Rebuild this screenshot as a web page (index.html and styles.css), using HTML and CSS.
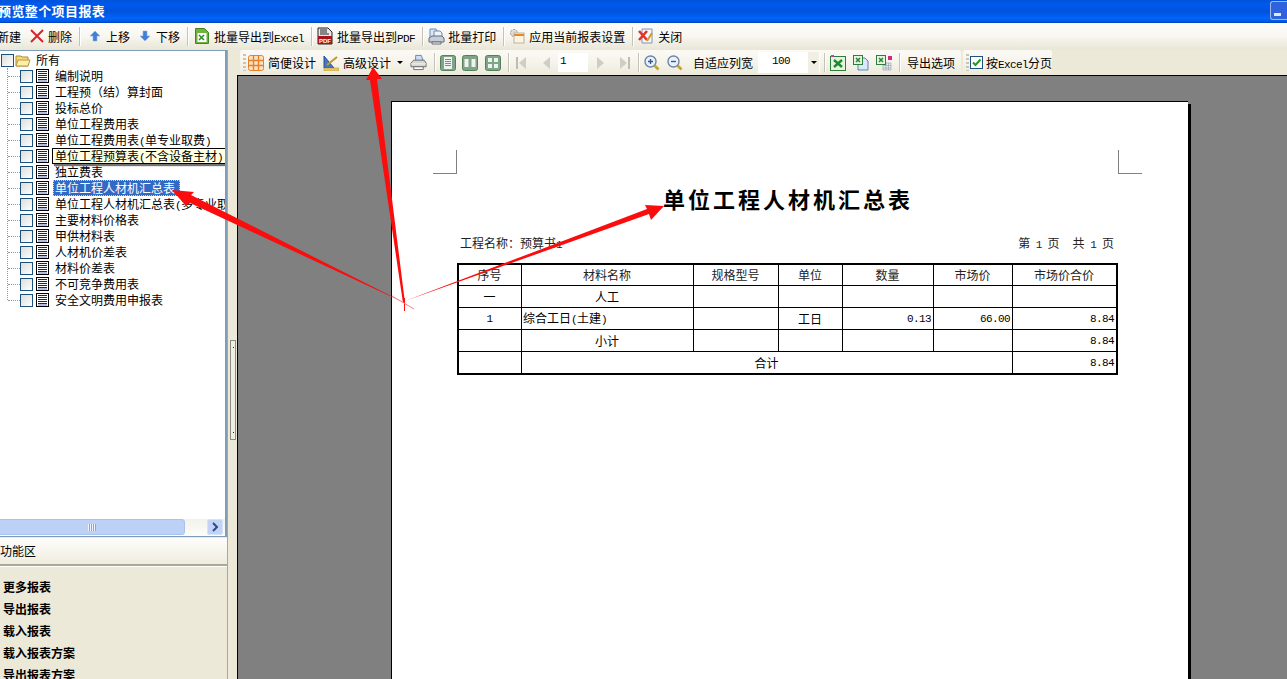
FILE: index.html
```html
<!DOCTYPE html>
<html lang="zh-CN">
  <head>
    <meta charset="UTF-8" />
    <title>预览整个项目报表</title>
    <link rel="stylesheet" href="styles.css">
  </head>
  <body>
    <svg class="defs" width="0" height="0">
      <symbol id="doc" viewBox="0 0 13 14">
        <rect x=".5" y=".5" width="12" height="13" fill="#fff" stroke="#000"/>
        <path d="M2 2.5h9M2 4.5h9M2 6.5h9M2 8.5h9M2 10.5h9" stroke="#0a1f9c"/>
        <path d="M2 12h9" stroke="#0a1f9c" stroke-width=".6"/>
      </symbol>
      <symbol id="folder" viewBox="0 0 16 14">
        <path d="M1 3h5l1 1h6v9H1z" fill="#f6d874" stroke="#a98b3a"/>
        <path d="M1 13l2-6h12l-2 6z" fill="#fdeea8" stroke="#b59a45"/>
      </symbol>
      <symbol id="excel-doc" viewBox="0 0 14 16">
        <path d="M.5.5h9l4 4v11H.5z" fill="#6fb33c" stroke="#3e8a22"/>
        <rect x="2.5" y="5" width="9" height="9" fill="#fff"/>
        <path d="M4 7l5 5M9 7l-5 5" stroke="#2f8f2a" stroke-width="1.6"/>
      </symbol>
      <symbol id="printer" viewBox="0 0 18 17">
        <path d="M6 1h6l2 6H6z" fill="#cfe0f5" stroke="#5f86b8"/>
        <path d="M1 9l3-3h11l2 3v4H1z" fill="#d6d6d2" stroke="#6b6b6b"/>
        <path d="M1 10h16" stroke="#f4f4f0"/>
        <path d="M4 13h10v3H4z" fill="#fff" stroke="#6b6b6b"/>
      </symbol>
      <symbol id="excel-box" viewBox="0 0 16 16">
        <rect x=".5" y="1.5" width="15" height="14" fill="#e6f3df" stroke="#2f7d3a"/>
        <path d="M4 5l8 7M12 5l-8 7" stroke="#1f8a2f" stroke-width="2.4"/>
        <rect x="1" y="0" width="3" height="2" fill="#e030c0"/>
      </symbol>
      <symbol id="zoom" viewBox="0 0 16 16">
        <circle cx="6.5" cy="6.5" r="5.5" fill="#e8f0fa" stroke="#6d86a8" stroke-width="1.4"/>
        <path d="M10.5 10.5l4 4" stroke="#c9a033" stroke-width="2.6"/>
      </symbol>
      <symbol id="page-btn" viewBox="0 0 16 16">
        <rect x=".5" y=".5" width="15" height="15" rx="2" fill="#7fa586" stroke="#54805c"/>
      </symbol>
    </svg>

    <header class="titlebar">
      <span class="title-text">预览整个项目报表</span>
      <span class="min-btn"><i></i></span>
    </header>

    <nav class="toolbar">
      <span class="first-tool">新建</span>
      <svg class="g9" width="14" height="16" viewBox="0 0 14 16"><path d="M1 2l12 12M13 2L1 14" stroke="#d8232a" stroke-width="2"/></svg>
      <span class="g4">删除</span>
      <i class="sep"></i>
      <svg class="g10" width="10" height="12" viewBox="0 0 10 12"><path d="M5 1l5 5H7v5H3V6H0z" fill="#3f7fd6" stroke="#8fb4e8" stroke-width=".6"/></svg>
      <span class="g6">上移</span>
      <svg class="g10" width="10" height="12" viewBox="0 0 10 12"><path d="M5 11l5-5H7V1H3v5H0z" fill="#3f7fd6" stroke="#8fb4e8" stroke-width=".6"/></svg>
      <span class="g6">下移</span>
      <i class="sep"></i>
      <svg width="14" height="16"><use href="#excel-doc"/></svg>
      <span class="g5">批量导出到<span class="lat">Excel</span></span>
      <i class="sep"></i>
      <svg class="g5" width="16" height="18" viewBox="0 0 16 18">
        <path d="M1 1h10l4 4v12H1z" fill="#e8e8e8" stroke="#222"/>
        <path d="M3 3h7M3 5h7M3 7h9" stroke="#222" stroke-width="1.2"/>
        <rect x="1" y="9" width="14" height="8" fill="#a8141c"/>
        <text x="8" y="16" class="pdf-label">PDF</text>
      </svg>
      <span class="g4">批量导出到<span class="lat">PDF</span></span>
      <i class="sep"></i>
      <svg class="g5" width="17" height="17" viewBox="0 0 17 17">
        <path d="M2 1h6l2 3v7H2z" fill="#dbe7f7" stroke="#6a8cb8"/>
        <path d="M6 3h6l2 2v6H6z" fill="#eef3fb" stroke="#6a8cb8"/>
        <path d="M1 10l3-2h10l2 2v4H1z" fill="#c8ced8" stroke="#5f6b7c"/>
        <path d="M4 14h9v2H4z" fill="#fff" stroke="#5f6b7c"/>
      </svg>
      <span class="g3">批量打印</span>
      <i class="sep"></i>
      <svg class="g5" width="16" height="16" viewBox="0 0 16 16">
        <circle cx="5" cy="5" r="3.5" fill="#ddd" stroke="#999" stroke-dasharray="2 1"/>
        <rect x="5" y="5" width="10" height="10" fill="#fdf3df" stroke="#b9b2a0"/>
        <path d="M5 7h10" stroke="#e58a2c" stroke-width="2"/>
      </svg>
      <span class="g4">应用当前报表设置</span>
      <i class="sep"></i>
      <svg class="g5" width="16" height="16" viewBox="0 0 16 16">
        <path d="M4 1h10v14H4z" fill="#f4f6fb" stroke="#7f94b8"/>
        <path d="M1 3l8 9M9 3l-8 9" stroke="#e0342a" stroke-width="2.6"/>
        <path d="M14 5l-5 8" stroke="#d59a2a" stroke-width="2"/>
      </svg>
      <span class="g4">关闭</span>
    </nav>

    <div class="main">
      <aside class="side">
        <div class="tree-pane">
          <div class="tree">
            <div class="root-row">
              <i class="check"></i>
              <svg width="16" height="14"><use href="#folder"/></svg>
              <span>所有</span>
            </div>
            <ul class="tree-list">
              <li class="tree-row"><i class="check"></i><svg width="13" height="14"><use href="#doc"/></svg><span>编制说明</span></li>
              <li class="tree-row"><i class="check"></i><svg width="13" height="14"><use href="#doc"/></svg><span>工程预（结）算封面</span></li>
              <li class="tree-row"><i class="check"></i><svg width="13" height="14"><use href="#doc"/></svg><span>投标总价</span></li>
              <li class="tree-row"><i class="check"></i><svg width="13" height="14"><use href="#doc"/></svg><span>单位工程费用表</span></li>
              <li class="tree-row"><i class="check"></i><svg width="13" height="14"><use href="#doc"/></svg><span>单位工程费用表<span class="lat">(</span>单专业取费<span class="lat">)</span></span></li>
              <li class="tree-row"><i class="check"></i><svg width="13" height="14"><use href="#doc"/></svg><span>单位工程预算表<span class="lat">(</span>不含设备主材<span class="lat">)</span></span>
                <div class="tooltip">单位工程预算表<span class="lat">(</span>不含设备主材<span class="lat">)</span></div>
              </li>
              <li class="tree-row"><i class="check"></i><svg width="13" height="14"><use href="#doc"/></svg><span>独立费表</span></li>
              <li class="tree-row"><i class="check"></i><svg width="13" height="14"><use href="#doc"/></svg><span class="selected">单位工程人材机汇总表</span></li>
              <li class="tree-row"><i class="check"></i><svg width="13" height="14"><use href="#doc"/></svg><span>单位工程人材机汇总表<span class="lat">(</span>多专业取费<span class="lat">)</span></span></li>
              <li class="tree-row"><i class="check"></i><svg width="13" height="14"><use href="#doc"/></svg><span>主要材料价格表</span></li>
              <li class="tree-row"><i class="check"></i><svg width="13" height="14"><use href="#doc"/></svg><span>甲供材料表</span></li>
              <li class="tree-row"><i class="check"></i><svg width="13" height="14"><use href="#doc"/></svg><span>人材机价差表</span></li>
              <li class="tree-row"><i class="check"></i><svg width="13" height="14"><use href="#doc"/></svg><span>材料价差表</span></li>
              <li class="tree-row"><i class="check"></i><svg width="13" height="14"><use href="#doc"/></svg><span>不可竞争费用表</span></li>
              <li class="tree-row"><i class="check"></i><svg width="13" height="14"><use href="#doc"/></svg><span>安全文明费用申报表</span></li>
            </ul>
          </div>
          <div class="hscroll">
            <div class="hscroll-thumb"><i></i></div>
            <div class="hscroll-btn">
              <svg width="8" height="10" viewBox="0 0 8 10"><path d="M2 1l4 4-4 4" fill="none" stroke="#2a4a8a" stroke-width="2"/></svg>
            </div>
          </div>
        </div>
        <div class="func-head">功能区</div>
        <ul class="func-list">
          <li>更多报表</li>
          <li>导出报表</li>
          <li>载入报表</li>
          <li>载入报表方案</li>
          <li>导出报表方案</li>
        </ul>
      </aside>

      <div class="splitter"><i class="grip"></i></div>

      <section class="preview">
        <div class="preview-bars">
          <div class="pbar">
            <i class="dots"></i>
            <svg class="g2" width="16" height="16" viewBox="0 0 16 16">
              <rect x=".5" y=".5" width="15" height="15" rx="2" fill="#fbe3c8" stroke="#e8802a"/>
              <path d="M5.5 1v14M10.5 1v14M1 5.5h14M1 10.5h14" stroke="#e8802a" stroke-width="1.4"/>
            </svg>
            <span class="g4">简便设计</span>
            <svg width="16" height="16" viewBox="0 0 16 16">
              <path d="M1 1v12l10 0z" fill="#3f78c9" stroke="#2a4f8f"/>
              <path d="M4 10l10-8" stroke="#c8962a" stroke-width="2"/>
              <rect x="1" y="13" width="15" height="3" fill="#e8c860" stroke="#a98b3a" stroke-width=".5"/>
            </svg>
            <span class="g4">高级设计</span>
            <i class="caret g6"></i>
            <svg width="17" height="17"><use href="#printer"/></svg>
            <i class="sep"></i>
            <svg class="g5" width="16" height="16" viewBox="0 0 16 16">
              <use href="#page-btn"/>
              <rect x="4" y="2" width="8" height="12" fill="#eef2f0"/>
              <path d="M5 4.500h6M5 6.500h6M5 8.500h6M5 10.500h6" stroke="#7a8a9a"/>
            </svg>
            <svg class="g6" width="16" height="16" viewBox="0 0 16 16">
              <use href="#page-btn"/>
              <rect x="2.500" y="4" width="4" height="8" fill="#eef2f0"/>
              <rect x="9.500" y="4" width="4" height="8" fill="#eef2f0"/>
            </svg>
            <svg width="16" height="16" viewBox="0 0 16 16">
              <use href="#page-btn"/>
              <path d="M3 3h4v4H3zM9 3h4v4H9zM3 9h4v4H3zM9 9h4v4H9z" fill="#eef2f0"/>
            </svg>
            <i class="sep"></i>
            <svg width="10" height="12" viewBox="0 0 10 12"><path d="M1 0v12" stroke="#bdbcb4" stroke-width="2"/><path d="M10 0v12L3 6z" fill="#cfcec6"/></svg>
            <svg class="g15" width="10" height="12" viewBox="0 0 10 12"><path d="M9 0v12L2 6z" fill="#cfcec6"/></svg>
            <div class="page-input">1</div>
            <svg class="g8" width="10" height="12" viewBox="0 0 10 12"><path d="M1 0v12l7-6z" fill="#cfcec6"/></svg>
            <svg class="g14" width="10" height="12" viewBox="0 0 10 12"><path d="M9 0v12" stroke="#bdbcb4" stroke-width="2"/><path d="M0 0v12l7-6z" fill="#cfcec6"/></svg>
            <i class="sep g8"></i>
            <svg class="g5" width="16" height="16" viewBox="0 0 16 16"><use href="#zoom"/><path d="M4 6.500h5M6.500 4v5" stroke="#34568a" stroke-width="1.300"/></svg>
            <svg width="16" height="16" viewBox="0 0 16 16"><use href="#zoom"/><path d="M4 6.500h5" stroke="#34568a" stroke-width="1.300"/></svg>
            <span class="g10">自适应列宽</span>
            <div class="combo g5"><span class="combo-value">100</span><span class="combo-btn"><i class="caret"></i></span></div>
            <i class="sep g4"></i>
            <svg class="g5" width="16" height="16"><use href="#excel-box"/></svg>
            <svg width="16" height="16" viewBox="0 0 16 16">
              <path d="M5 3h7l3 3v9H5z" fill="#dbe7fa" stroke="#5f82bd"/>
              <rect x=".5" y=".5" width="9" height="9" fill="#e6f3df" stroke="#2f7d3a"/>
              <path d="M3 3l4 4M7 3l-4 4" stroke="#1f8a2f" stroke-width="1.500"/>
            </svg>
            <svg width="16" height="16" viewBox="0 0 16 16">
              <path d="M7 8h8v7H7zM7 10.500h8M7 13h8M10 8v7M12.500 8v7" fill="#e8ebf2" stroke="#9aa3b5" stroke-width=".7"/>
              <rect x=".5" y=".5" width="9" height="9" fill="#e6f3df" stroke="#2f7d3a"/>
              <path d="M3 3l4 4M7 3l-4 4" stroke="#1f8a2f" stroke-width="1.500"/>
              <rect x="12" y="1" width="4" height="4" fill="#d02a80"/>
            </svg>
            <i class="sep"></i>
            <span>导出选项</span>
          </div>
          <div class="pbar pbar-check">
            <i class="dots"></i>
            <i class="check is-checked g1">
              <svg width="11" height="11" viewBox="0 0 11 11"><path d="M2 5.500l2.500 2.500L9.500 2.500" fill="none" stroke="#1f9a2a" stroke-width="2"/></svg>
            </i>
            <span class="g3">按<span class="lat">Excel</span>分页</span>
          </div>
        </div>

        <div class="viewer">
          <article class="sheet">
            <div class="crops"><i class="crop-l"></i><i class="crop-r"></i></div>
            <h1 class="sheet-title">单位工程人材机汇总表</h1>
            <div class="sheet-info">
              <span>工程名称：预算书<span class="lat">1</span></span>
              <span class="page-no"><span>第 <span class="lat">1</span> 页</span><span>共 <span class="lat">1</span> 页</span></span>
            </div>
            <table class="report">
              <colgroup>
                <col class="c1"><col class="c2"><col class="c3"><col class="c4"><col class="c5"><col class="c6"><col class="c7">
              </colgroup>
              <tr class="report-head">
                <td>序号</td><td>材料名称</td><td>规格型号</td><td>单位</td><td>数量</td><td>市场价</td><td>市场价合价</td>
              </tr>
              <tr>
                <td>一</td><td>人工</td><td></td><td></td><td></td><td></td><td></td>
              </tr>
              <tr>
                <td class="lat">1</td><td class="left">综合工日<span class="lat">(</span>土建<span class="lat">)</span></td><td></td><td>工日</td><td class="num">0.13</td><td class="num">66.00</td><td class="num">8.84</td>
              </tr>
              <tr>
                <td></td><td>小计</td><td></td><td></td><td></td><td></td><td class="num">8.84</td>
              </tr>
              <tr class="report-foot">
                <td></td><td colspan="5">合计</td><td class="num">8.84</td>
              </tr>
            </table>
          </article>
        </div>
      </section>
    </div>

    <svg class="arrows" width="1287" height="679" viewBox="0 0 1287 679">
      <polygon points="373,67 382,79 377,79 405,303 403,303 370,80 366,80" fill="#fb0d0d"/>
      <polygon points="172,190 194,192 191,195 405,303 190,203 186,206" fill="#fb0d0d"/>
      <polygon points="664,206 645,205 647,209 405,301 649,214 651,220" fill="#fb0d0d"/>
      <path d="M404.500 298v13" stroke="#fb0d0d"/>
      <path d="M392 296l22 13" stroke="#fb8080"/>
    </svg>
  </body>
</html>
```

FILE: styles.css
```css
* {
  box-sizing: border-box;
}
html, body {
  margin: 0;
  height: 679px;
  overflow: hidden;
}
body {
  position: relative;
  font-family: "Noto Sans CJK SC", "Liberation Sans", sans-serif;
  font-size: 12px;
  color: #000;
  background-color: #ece9d8;
}
ul {
  list-style: none;
  margin: 0;
  padding: 0;
}
i {
  display: block;
  font-style: normal;
}
svg {
  display: block;
  flex-shrink: 0;
}
.defs {
  position: absolute;
}
.lat {
  font-family: "Liberation Mono", monospace;
  font-size: 11px;
  letter-spacing: -0.6px;
}

/* spacing between toolbar items, 7px unless set */
.toolbar > *, .pbar > * {
  margin-left: 7px;
  flex-shrink: 0;
}
.toolbar > .g3, .pbar > .g3 { margin-left: 3px; }
.toolbar > .g4, .pbar > .g4 { margin-left: 4px; }
.toolbar > .g5, .pbar > .g5 { margin-left: 5px; }
.toolbar > .g6, .pbar > .g6 { margin-left: 6px; }
.toolbar > .g9 { margin-left: 9px; }
.toolbar > .g10, .pbar > .g10 { margin-left: 10px; }
.pbar > .g1 { margin-left: 1px; }
.pbar > .g2 { margin-left: 2px; }
.pbar > .g8 { margin-left: 8px; }
.pbar > .g14 { margin-left: 14px; }
.pbar > .g15 { margin-left: 15px; }

.sep {
  width: 1px;
  height: 19px;
  background-color: #c5c2b8;
  box-shadow: 1px 0 0 #fff;
}

/* title bar */
.titlebar {
  display: flex;
  justify-content: space-between;
  height: 23px;
  background: linear-gradient(#0054d8 0, #0058ee 20%, #0053dd 50%, #0064fb 80%, #0058e6 94%, #003cb0 100%);
}
.title-text {
  margin-left: -2px;
  font-size: 13px;
  font-weight: 700;
  line-height: 21px;
  letter-spacing: 0.4px;
  color: #fff;
}
.min-btn {
  width: 17px;
  height: 19px;
  margin-top: 1px;
  padding: 11px 0 0 3px;
  border: 1px solid #9db8ee;
  border-right: 0;
  border-radius: 3px 0 0 3px;
  background-color: #2f62dc;
}
.min-btn i {
  width: 7px;
  height: 3px;
  background-color: #dfe6f7;
}

/* main toolbar */
.toolbar {
  display: flex;
  align-items: center;
  height: 27px;
  padding-bottom: 1px;
  background: linear-gradient(#fefdfb, #f7f6f0 50%, #e9e6d6);
}
.toolbar > .first-tool {
  margin-left: -3px;
}

.main {
  display: flex;
  height: 629px;
}

/* left side */
.side {
  display: flex;
  flex-direction: column;
  width: 228px;
  border-right: 1px solid #aca899;
}
.tree-pane {
  display: flex;
  flex-direction: column;
  height: 487px;
  border-top: 1px solid #7f9db9;
  border-right: 2px solid #7f9db9;
  border-bottom: 1px solid #7f9db9;
  background-color: #fff;
  flex-shrink: 0;
}
.tree {
  flex: 1;
  padding-top: 1px;
  overflow: hidden;
  white-space: nowrap;
}
.root-row, .tree-row {
  display: flex;
  align-items: center;
  height: 16px;
}
.root-row {
  padding-left: 1px;
}
.root-row svg {
  margin-left: 1px;
}
.root-row span {
  margin: -1px 0 0 5px;
}
.check {
  width: 13px;
  height: 13px;
  border: 1px solid #1c5180;
  background: linear-gradient(135deg, #dcdcd7, #fff);
  flex-shrink: 0;
}
.check.is-checked {
  background: #fff;
}
.tree-list {
  position: relative;
}
.tree-list::before {
  content: "";
  position: absolute;
  left: 7px;
  top: 0;
  bottom: 8px;
  border-left: 1px dotted #999;
}
.tree-row {
  position: relative;
  padding-left: 20px;
}
.tree-row::before {
  content: "";
  position: absolute;
  left: 8px;
  top: 8px;
  width: 12px;
  border-top: 1px dotted #999;
}
.tree-row svg {
  margin-left: 3px;
}
.tree-row > span {
  margin: -1px 0 0 6px;
}
.tree-row > .selected {
  margin: 0 0 0 4px;
  padding: 0 1px;
  border: 1px dotted #e8d08a;
  height: 16px;
  line-height: 13px;
  width: 127px;
  background-color: #316ac5;
  color: #fff;
}
.tooltip {
  position: absolute;
  left: 52px;
  top: 0;
  width: 174px;
  height: 16px;
  padding-left: 2px;
  line-height: 13px;
  border: 1px solid #000;
  background-color: #ffffe1;
  box-shadow: 2px 2px 1px rgba(0, 0, 0, 0.55);
}
.hscroll {
  display: flex;
  height: 17px;
  padding-bottom: 1px;
  background: linear-gradient(#f2f1ea, #fdfdfa);
}
.hscroll-thumb {
  display: flex;
  align-items: center;
  justify-content: center;
  width: 186px;
  margin-left: -1px;
  border: 1px solid #a9c2ee;
  border-radius: 0 3px 3px 0;
  background-color: #bdd0f6;
}
.hscroll-thumb i {
  width: 8px;
  height: 7px;
  background: repeating-linear-gradient(90deg, #eef3fd 0 1px, #8aa5da 1px 2px);
}
.hscroll-btn {
  display: flex;
  align-items: center;
  justify-content: center;
  width: 16px;
  margin-left: 22px;
  border: 1px solid #d7e2f8;
  border-radius: 2px;
  background-color: #c2d3f7;
}
.func-head {
  height: 28px;
  margin-top: 1px;
  line-height: 26px;
  border-bottom: 2px solid #aca899;
  background: linear-gradient(#fefdfb, #efecdf);
  box-shadow: 0 1px 0 #fff;
  flex-shrink: 0;
}
.func-list {
  padding: 10px 0 0 3px;
  font-weight: 700;
}
.func-list li {
  height: 22px;
  line-height: 22px;
}

.splitter {
  width: 9px;
  padding: 290px 0 0 2px;
}
.grip {
  width: 6px;
  height: 100px;
  border: 1px solid #8d8a7e;
  background:
    linear-gradient(#222, #222) 2px 6px / 1px 1px no-repeat,
    linear-gradient(#222, #222) 2px 91px / 1px 1px no-repeat,
    #f0eee2;
}

/* report preview */
.preview {
  flex: 1;
  display: flex;
  flex-direction: column;
  min-width: 0;
}
.preview-bars {
  display: flex;
  height: 25px;
  padding-left: 3px;
  flex-shrink: 0;
}
.pbar {
  display: flex;
  align-items: center;
  height: 25px;
  padding: 0 6px 0 3px;
  border-radius: 3px 3px 0 0;
  background: linear-gradient(#fbfaf5, #f4f2e8 60%, #ece9d8);
}
.pbar-check {
  margin-left: 2px;
  padding-right: 0;
}
.pbar > .dots {
  width: 3px;
  height: 17px;
  margin-left: 0;
  background: repeating-linear-gradient(#c8c5b8 0 2px, transparent 2px 4px);
}
.caret {
  width: 0;
  height: 0;
  border-left: 3px solid transparent;
  border-right: 3px solid transparent;
  border-top: 3px solid #000;
}
.page-input {
  width: 30px;
  height: 19px;
  padding-left: 2px;
  line-height: 17px;
  font-family: "Liberation Mono", monospace;
  font-size: 11px;
  background-color: #fff;
}
.combo {
  display: flex;
  width: 62px;
  height: 21px;
  background-color: #fff;
}
.combo-value {
  width: 50px;
  padding-left: 14px;
  line-height: 19px;
  font-family: "Liberation Mono", monospace;
  font-size: 11px;
  letter-spacing: -0.6px;
}
.combo-btn {
  display: flex;
  align-items: center;
  justify-content: center;
  width: 12px;
  background-color: #f1efe4;
  border-right: 1px solid #fff;
}
.viewer {
  flex: 1;
  padding: 25px 0 0 153px;
  overflow: hidden;
  border-top: 1px solid #000;
  border-left: 1px solid #000;
  background-color: #808080;
}
.sheet {
  width: 797px;
  height: 700px;
  border-top: 1px solid #000;
  border-left: 1px solid #000;
  background-color: #fff;
  box-shadow: 3px 3px 0 #000;
}
.crops {
  display: flex;
  justify-content: space-between;
  margin: 48px 46px 0 41px;
}
.crop-l, .crop-r {
  width: 24px;
  height: 24px;
  border-bottom: 1px solid #808080;
}
.crop-l {
  border-right: 1px solid #808080;
}
.crop-r {
  border-left: 1px solid #808080;
}
.sheet-title {
  margin: 11px 0 0;
  padding-right: 4px;
  text-align: center;
  font-size: 22px;
  font-weight: 700;
  line-height: 26px;
  letter-spacing: 3px;
}
.sheet-info {
  display: flex;
  justify-content: space-between;
  margin: 25px 74px 0 68px;
  line-height: 14px;
  color: #222;
}
.page-no {
  display: flex;
  gap: 13px;
  word-spacing: 3px;
}
.report {
  width: 661px;
  margin: 11px 0 0 65px;
  table-layout: fixed;
  border-collapse: separate;
  border-spacing: 0;
  border: 2px solid #000;
}
.c1 { width: 63px; }
.c2 { width: 172px; }
.c3 { width: 85px; }
.c4 { width: 64px; }
.c5 { width: 91px; }
.c6 { width: 79px; }
.c7 { width: 103px; }
.report td {
  height: 22px;
  padding: 0 2px 0 1px;
  border-right: 1px solid #000;
  border-bottom: 1px solid #000;
  text-align: center;
  line-height: 16px;
}
.report td:last-child {
  border-right: 0;
}
.report-head td {
  height: 21px;
  color: #222;
}
.report-foot td {
  height: 21px;
  border-bottom: 0;
}
.report .left {
  text-align: left;
}
.report .num {
  text-align: right;
  font-family: "Liberation Mono", monospace;
  font-size: 11px;
  letter-spacing: -0.6px;
}

.arrows {
  position: absolute;
  left: 0;
  top: 0;
  pointer-events: none;
}
.pdf-label {
  font-family: "Liberation Sans", sans-serif;
  font-size: 6px;
  font-weight: 700;
  fill: #fff;
  text-anchor: middle;
}
```
